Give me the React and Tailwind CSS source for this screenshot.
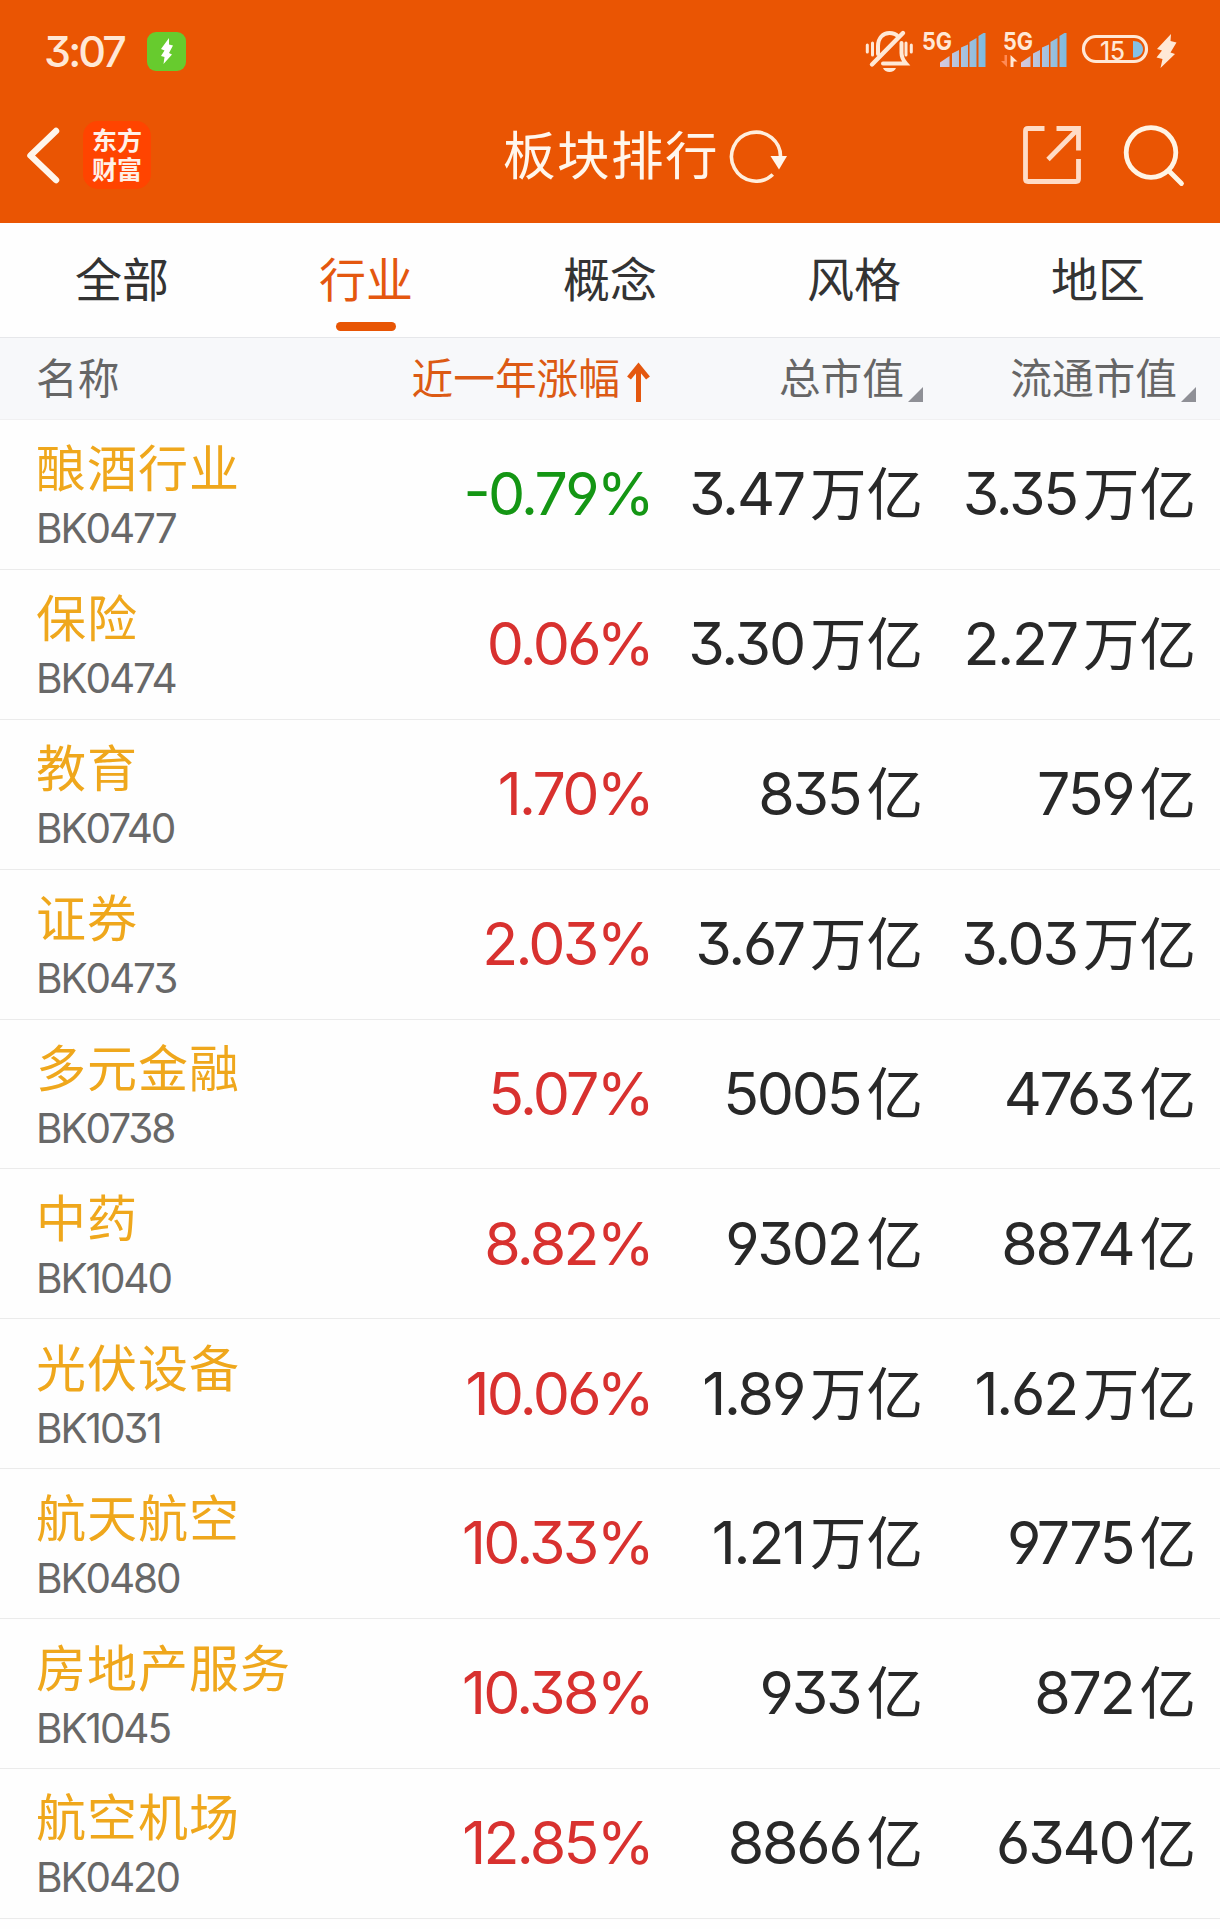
const tabs = ['全部', '行业', '概念', '风格', '地区'];

const rows = [
  { name: '酿酒行业', code: 'BK0477', change: '-0.79', total: ['3.47', '万亿'], float: ['3.35', '万亿'] },
  { name: '保险', code: 'BK0474', change: '0.06', total: ['3.30', '万亿'], float: ['2.27', '万亿'] },
  { name: '教育', code: 'BK0740', change: '1.70', total: ['835', '亿'], float: ['759', '亿'] },
  { name: '证券', code: 'BK0473', change: '2.03', total: ['3.67', '万亿'], float: ['3.03', '万亿'] },
  { name: '多元金融', code: 'BK0738', change: '5.07', total: ['5005', '亿'], float: ['4763', '亿'] },
  { name: '中药', code: 'BK1040', change: '8.82', total: ['9302', '亿'], float: ['8874', '亿'] },
  { name: '光伏设备', code: 'BK1031', change: '10.06', total: ['1.89', '万亿'], float: ['1.62', '万亿'] },
  { name: '航天航空', code: 'BK0480', change: '10.33', total: ['1.21', '万亿'], float: ['9775', '亿'] },
  { name: '房地产服务', code: 'BK1045', change: '10.38', total: ['933', '亿'], float: ['872', '亿'] },
  { name: '航空机场', code: 'BK0420', change: '12.85', total: ['8866', '亿'], float: ['6340', '亿'] },
];

function MuteIcon() {
  return (
    <svg className="h-[54px] w-[50px]" viewBox="865 24 50 54" fill="none" stroke="#ffe8d6" strokeWidth="4" strokeLinecap="round">
      <path d="M867.3 45v7M872.5 43v12M906 43v12M911.3 45v7" strokeWidth="3" />
      <path d="M878 54V46c0-8 5-13 11.500-13 3.500 0 6.500 1.200 8.500 3.500" />
      <path d="M903 33L872 64.500" strokeWidth="4.4" />
      <path d="M901.500 43v10c0 4.500 1.500 7 4.500 10.500H883" />
      <path d="M883 68h13c-1 2.800-3.500 4-6.500 4s-5.500-1.200-6.500-4z" fill="#ffe8d6" stroke="none" />
    </svg>
  );
}

function SignalIcon({ id, data }) {
  return (
    <svg className="h-[54px] w-[67px]" viewBox="0 24 67 54">
      <defs>
        <linearGradient id={id} gradientUnits="userSpaceOnUse" x1="21" y1="0" x2="66" y2="0">
          <stop offset="0" stopColor="#d6c9dc" />
          <stop offset="1" stopColor="#7cbbe0" />
        </linearGradient>
      </defs>
      <text x="2" y="50" fontFamily="Inter, sans-serif" fontWeight="700" fontSize="24" textLength="30" lengthAdjust="spacingAndGlyphs" fill="#ffe8d6">5G</text>
      {data && (
        <>
          <path d="M6 55v12l-6-6h3.500v-6z" fill="#ff8a55" />
          <path d="M9.500 67V55l7 6.500h-4V67z" fill="#ffe8d6" />
        </>
      )}
      <g fill={`url(#${id})`}>
        <path d="M20 67v-4.500l9.500-6.500V67z" />
        <path d="M32 67V53.500l7-3.500V67z" />
        <path d="M41 67V47.500l7-3V67z" />
        <path d="M49.500 67V42l7-4V67z" />
        <path d="M58.500 67V36l5-3h2v34z" />
      </g>
    </svg>
  );
}

function BatteryIcon() {
  return (
    <svg className="h-[54px] w-[96px]" viewBox="1081 24 96 54">
      <rect x="1083.500" y="36.500" width="63" height="25" rx="12.500" fill="none" stroke="#ffe8d6" strokeWidth="3.200" />
      <path d="M1133 41c6 0 10 3.500 10 8.200s-4 8.300-10 8.300z" fill="#84c1e6" />
      <text x="1100" y="59.500" fontFamily="Inter, sans-serif" fontWeight="500" fontSize="25" textLength="25" lengthAdjust="spacingAndGlyphs" fill="#ffe8d6">15</text>
      <path d="M1171 34l-14 15 5 1.500-5.500 7 6 1.500-2 9L1175 54l-4.500-1.500 6-10-6-1.500z" fill="#ffe8d6" />
    </svg>
  );
}

function StatusBar() {
  return (
    <div className="flex h-[102px] items-center pl-[44px] pr-[43px]">
      <span className="w-[103px] text-[43px] leading-none font-medium tracking-[-2.9px] text-[#ffe8d6]">3:07</span>
      <div className="flex size-[39px] items-center justify-center rounded-[9px] bg-[#67cb2e]">
        <svg className="h-[26px] w-[14px]" viewBox="0 0 14 26" fill="#fff">
          <path d="M9 0L1 11l3.500 1.500L1 18l3.500 1L3.500 26 12 16.500 9 15l4-7.500L9 6.500z" />
        </svg>
      </div>
      <div className="ml-auto flex items-center">
        <MuteIcon />
        <div className="ml-[5px]"><SignalIcon id="sig1" /></div>
        <div className="ml-[14px]"><SignalIcon id="sig2" data /></div>
        <div className="ml-[13px]"><BatteryIcon /></div>
      </div>
    </div>
  );
}

function TitleBar() {
  return (
    <div className="flex h-[106px] items-center pl-[25px] pr-[34px]">
      <svg className="h-[60px] w-[36px]" viewBox="25 125 36 60" fill="none" stroke="#fff6ec" strokeWidth="6.5" strokeLinecap="round" strokeLinejoin="round">
        <path d="M56 131L30.500 155.500 56 180" />
      </svg>
      <div className="ml-[22px] flex size-[68px] flex-col items-center justify-center rounded-[15px] bg-[#ff4400] pt-[1px] text-[25px] leading-[29px] font-bold text-[#fff1e8]">
        <span>东方</span>
        <span>财富</span>
      </div>
      <h1 className="ml-[352px] pt-[2px] text-[52.5px] leading-[60px] tracking-[1.5px] text-[#fff6ec]">板块排行</h1>
      <svg className="ml-[8px] h-[56px] w-[62px]" viewBox="727 127 62 56" fill="none" stroke="#ffeedd" strokeWidth="3.6">
        <path d="M772.800 174.500a24.500 24.500 0 1 1 7.700-17" />
        <path d="M770.500 156h16.500l-8 13.500z" fill="#fff6ec" stroke="none" />
      </svg>
      <svg className="ml-auto h-[60px] w-[60px]" viewBox="1022 125 60 60" fill="none" stroke="#ffdcc6" strokeWidth="4.8">
        <path d="M1044.500 128.500H1028q-2.500 0-2.500 2.500v48q0 2.500 2.500 2.500h48q2.500 0 2.500-2.500v-20" />
        <path d="M1056.500 128.500h22v22M1078 129l-30 30.500" />
      </svg>
      <svg className="ml-[41px] h-[64px] w-[63px]" viewBox="1123 123 63 64" fill="none" stroke="#fff4e4" strokeWidth="4.8" strokeLinecap="round">
        <circle cx="1151" cy="152.500" r="24.800" />
        <path d="M1169 171l12.500 12.500" />
      </svg>
    </div>
  );
}

function SortHeader({ label }) {
  return (
    <div className="flex items-center justify-end">
      <span>{label}</span>
      <svg className="ml-[4px] mt-[31px] h-[15px] w-[15px]" viewBox="0 0 15 15" fill="#8f9096">
        <path d="M15 0v15H0z" />
      </svg>
    </div>
  );
}

function Amount({ value }) {
  const [num, unit] = value;
  return (
    <div className="flex items-baseline justify-end text-[#282828]">
      <span className="text-[59px] font-[370] tracking-[-2.2px]">{num}</span>
      <span className="ml-[6px] text-[56.5px]">{unit}</span>
    </div>
  );
}

export default function App() {
  return (
    <div className="h-[1929px] w-[1220px] overflow-hidden bg-[#fefefe] font-['Inter','Noto_Sans_CJK_SC',sans-serif] [font-feature-settings:'cv03','cv04','cv09']">
      <header className="h-[223px] bg-[#ea5503]">
        <StatusBar />
        <TitleBar />
      </header>

      {/* 分类标签 */}
      <nav className="grid h-[115px] grid-cols-5 border-b border-[#e6e7ea] text-[47px] leading-[60px]">
        {tabs.map((tab) => (
          <div key={tab} className={`flex flex-col items-center pt-[27px] ${tab === '行业' ? 'text-[#e4570f]' : 'text-[#333]'}`}>
            <span>{tab}</span>
            {tab === '行业' && <i className="mt-[12px] h-[9px] w-[60px] rounded-full bg-[#e85504]" />}
          </div>
        ))}
      </nav>

      {/* 表头 */}
      <div className="grid h-[82px] grid-cols-[364px_286px_273px_273px] items-center border-b border-[#f0f0f1] bg-[#f7f8fa] pt-px text-[41.7px] leading-[60px] text-[#666]">
        <span className="pl-[36px]">名称</span>
        <div className="flex items-center justify-end text-[#dc5a14]">
          <span>近一年涨幅</span>
          <svg className="ml-[7px] mt-[5px] h-[40px] w-[23px]" viewBox="0 0 23 40" fill="none" stroke="#e4570f" strokeWidth="5">
            <path d="M11.500 40V4M2 16l9.500-11.500L21 16" />
          </svg>
        </div>
        <SortHeader label="总市值" />
        <SortHeader label="流通市值" />
      </div>

      {/* 板块列表 */}
      {rows.map((row) => (
        <div key={row.code} className="grid h-[149.9px] grid-cols-[364px_288px_271px_273px] items-center border-b border-[#ebebeb]">
          <div className="pl-[36px] pt-[10px]">
            <p className="text-[50px] leading-[60px] tracking-[1px] whitespace-nowrap text-[#efa71c]">{row.name}</p>
            <p className="text-[40.5px] leading-[60px] font-[370] tracking-[-2.1px] text-[#686868]">{row.code}</p>
          </div>
          <div className={`text-right text-[59px] font-[370] tracking-[-2.7px] [font-feature-settings:'case','cv03','cv04','cv09'] ${row.change.startsWith('-') ? 'text-[#149614]' : 'text-[#d8312f]'}`}>
            {row.change}%
          </div>
          <Amount value={row.total} />
          <Amount value={row.float} />
        </div>
      ))}
    </div>
  );
}
